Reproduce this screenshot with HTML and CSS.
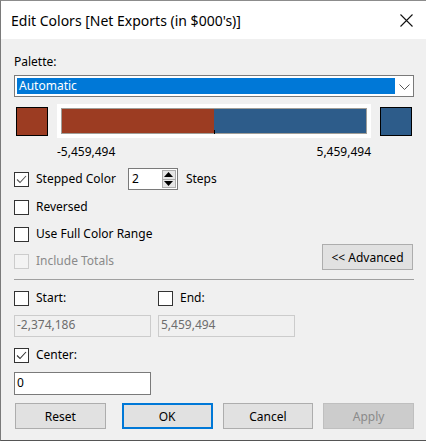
FILE: index.html
```html
<!DOCTYPE html>
<html>
<head>
<meta charset="utf-8">
<link rel="stylesheet" href="styles.css">
</head>
<body>
<div class="window">
  <div class="titlebar">
    <span class="title">Edit Colors [Net Exports (in $000's)]</span>
    <svg class="close" width="13" height="13" viewBox="0 0 13 13"><path d="M0.5 0.5 L12.5 12.5 M12.5 0.5 L0.5 12.5" stroke="#111" stroke-width="1.1" fill="none"/></svg>
  </div>
  <div class="content">
    <div class="label palette-label">Palette:</div>
    <div class="select">
      <div class="select-value">Automatic</div>
      <svg class="chev" width="11" height="6" viewBox="0 0 11 6"><path d="M0.5 0.5 L5.5 5.5 L10.5 0.5" stroke="#555" stroke-width="1" fill="none"/></svg>
    </div>
    <div class="swatch-row">
      <div class="swatch red"></div>
      <div class="bar-wrap">
        <div class="bar">
          <div class="bar-red"></div>
          <div class="bar-blue"></div>
          <div class="tick"></div>
        </div>
      </div>
      <div class="swatch blue"></div>
    </div>
    <div class="range-labels">
      <span>-5,459,494</span>
      <span>5,459,494</span>
    </div>
    <div class="row stepped">
      <span class="cb checked"><svg width="13" height="13" viewBox="0 0 13 13"><path d="M2 6.5 L5 9.5 L11 3" stroke="#555" stroke-width="1.1" fill="none"/></svg></span>
      <span class="cb-text">Stepped Color</span>
      <div class="spin">
        <span class="spin-val">2</span>
        <div class="spin-btns">
          <div class="spin-btn"><svg width="9" height="5" viewBox="0 0 9 5"><path d="M4.5 0 L9 5 L0 5 Z" fill="#000"/></svg></div>
          <div class="spin-btn"><svg width="9" height="5" viewBox="0 0 9 5"><path d="M0 0 L9 0 L4.5 5 Z" fill="#000"/></svg></div>
        </div>
      </div>
      <span class="steps">Steps</span>
    </div>
    <div class="row reversed">
      <span class="cb"></span><span class="cb-text">Reversed</span>
    </div>
    <div class="row fullrange">
      <span class="cb"></span><span class="cb-text">Use Full Color Range</span>
    </div>
    <div class="row totals-row">
      <div class="totals">
        <span class="cb disabled"></span><span class="cb-text disabled-text">Include Totals</span>
      </div>
      <button class="btn adv">&lt;&lt; Advanced</button>
    </div>
    <div class="sep"></div>
    <div class="two-col startend">
      <div class="col"><span class="cb"></span><span class="cb-text">Start:</span></div>
      <div class="col"><span class="cb"></span><span class="cb-text">End:</span></div>
    </div>
    <div class="two-col fields">
      <div class="field disabled-field">-2,374,186</div>
      <div class="field disabled-field">5,459,494</div>
    </div>
    <div class="row center-row">
      <span class="cb checked"><svg width="13" height="13" viewBox="0 0 13 13"><path d="M2 6.5 L5 9.5 L11 3" stroke="#333" stroke-width="1.1" fill="none"/></svg></span>
      <span class="cb-text">Center:</span>
    </div>
    <div class="field center-field">0</div>
    <div class="buttons">
      <button class="btn reset">Reset</button>
      <button class="btn ok">OK</button>
      <button class="btn cancel">Cancel</button>
      <button class="btn apply">Apply</button>
    </div>
  </div>
</div>
</body>
</html>
```
FILE: styles.css
```css
* { box-sizing: border-box; }
html, body { margin: 0; padding: 0; }
body {
  width: 426px;
  height: 441px;
  overflow: hidden;
  background: #f0f0f0;
  font-family: "Noto Sans", "DejaVu Sans", sans-serif;
  font-size: 12px;
  color: #000;
}
.window {
  width: 426px;
  height: 441px;
  border-top: 1px solid #8c8c8c;
  border-left: 1px solid #7a7a7a;
  border-bottom: 1px solid #555;
  background: #f0f0f0;
}
.titlebar {
  height: 38px;
  background: #fff;
  display: flex;
  align-items: center;
  justify-content: space-between;
  padding: 0 13px 0 10px;
}
.title {
  font-size: 14px;
  color: #000;
  line-height: 20px;
  margin-top: 1px;
}
.close { margin-top: 0px; }
.content {
  padding: 0 12px 0 13px;
  display: flex;
  flex-direction: column;
}
.label, .cb-text, .steps, .range-labels { line-height: 16px; }
.palette-label { margin-top: 15px; }
.select {
  margin-top: 5px;
  height: 22px;
  border: 1px solid #7a7a7a;
  background: #fff;
  padding: 2px;
  display: flex;
  align-items: center;
}
.select-value {
  width: 378px;
  height: 16px;
  background: #0078d7;
  color: #fff;
  line-height: 16px;
  padding-left: 2px;
}
.chev { margin-left: 4px; margin-top: 1px; }
.swatch-row {
  margin-top: 7px;
  display: flex;
  align-items: center;
  padding-left: 2px;
  gap: 9px;
}
.swatch {
  width: 32px;
  height: 29px;
  border: 1px solid #000;
}
.swatch.red { background: #9c3c22; }
.swatch.blue { background: #2d5c8a; }
.bar-wrap {
  width: 314px;
  height: 34px;
  background: #fff;
  padding: 4px;
}
.bar {
  position: relative;
  height: 26px;
  border: 1px solid #a09e98;
  display: flex;
}
.bar-red { width: 152px; background: #9c3c22; }
.bar-blue { flex: 1; background: #2d5c8a; }
.tick {
  position: absolute;
  left: 152px;
  bottom: -1px;
  width: 1px;
  height: 4px;
  background: #000;
}
.range-labels {
  margin-top: 6px;
  display: flex;
  justify-content: space-between;
  padding-left: 43px;
  width: 357px;
}
.row { display: flex; align-items: center; }
.cb {
  width: 15px;
  height: 15px;
  border: 1px solid #333;
  background: #fff;
  display: inline-flex;
  align-items: center;
  justify-content: center;
  flex: none;
}
.cb.disabled { border-color: #cccccc; background: #f3f3f3; }
.cb-text { margin-left: 7px; }
.disabled-text { color: #8a8a8a; }
.stepped { margin-top: 8px; height: 22px; }
.spin {
  margin-left: 12px;
  width: 50px;
  height: 22px;
  border: 1px solid #7a7a7a;
  background: #fff;
  display: flex;
  align-items: center;
  justify-content: space-between;
  padding: 0 1px 0 3px;
}
.spin-val { line-height: 16px; }
.spin-btns {
  display: flex;
  flex-direction: column;
  width: 14px;
  height: 18px;
}
.spin-btn {
  flex: 1;
  border: 1px solid #acacac;
  background: #e5e5e5;
  display: flex;
  align-items: center;
  justify-content: center;
}
.spin-btn + .spin-btn { border-top: none; }
.steps { margin-left: 8px; }
.reversed { margin-top: 9px; }
.fullrange { margin-top: 11px; }
.totals-row {
  margin-top: 2px;
  justify-content: space-between;
  align-items: flex-end;
  height: 27px;
}
.totals { display: flex; align-items: center; margin-bottom: 2px; }
.btn {
  font-family: inherit;
  font-size: 12px;
  height: 26px;
  width: 91px;
  border: 1px solid #adadad;
  background: #e1e1e1;
  color: #000;
  padding: 0;
  margin: 0;
}
.adv { align-self: flex-start; width: 91px; margin-right: 1px; }
.sep {
  margin-top: 8px;
  height: 1px;
  background: #a0a0a0;
  width: 400px;
}
.two-col { display: flex; gap: 7px; }
.two-col .col { width: 137px; display: flex; align-items: center; }
.startend { margin-top: 10px; }
.fields { margin-top: 9px; }
.field {
  width: 137px;
  height: 22px;
  border: 1px solid #7a7a7a;
  background: #fff;
  line-height: 18px;
  padding-left: 2px;
}
.disabled-field {
  border-color: #cccccc;
  background: #f0f0f0;
  color: #6d6d6d;
}
.center-row { margin-top: 10px; }
.center-field { margin-top: 9px; height: 23px; line-height: 19px; }
.buttons {
  margin-top: 8px;
  display: flex;
  padding-left: 1px;
}
.ok { margin-left: 16px; border: 2px solid #0078d7; }
.cancel { margin-left: 10px; }
.apply { margin-left: 10px; background: #cccccc; border-color: #bfbfbf; color: #8a8a8a; }
```
